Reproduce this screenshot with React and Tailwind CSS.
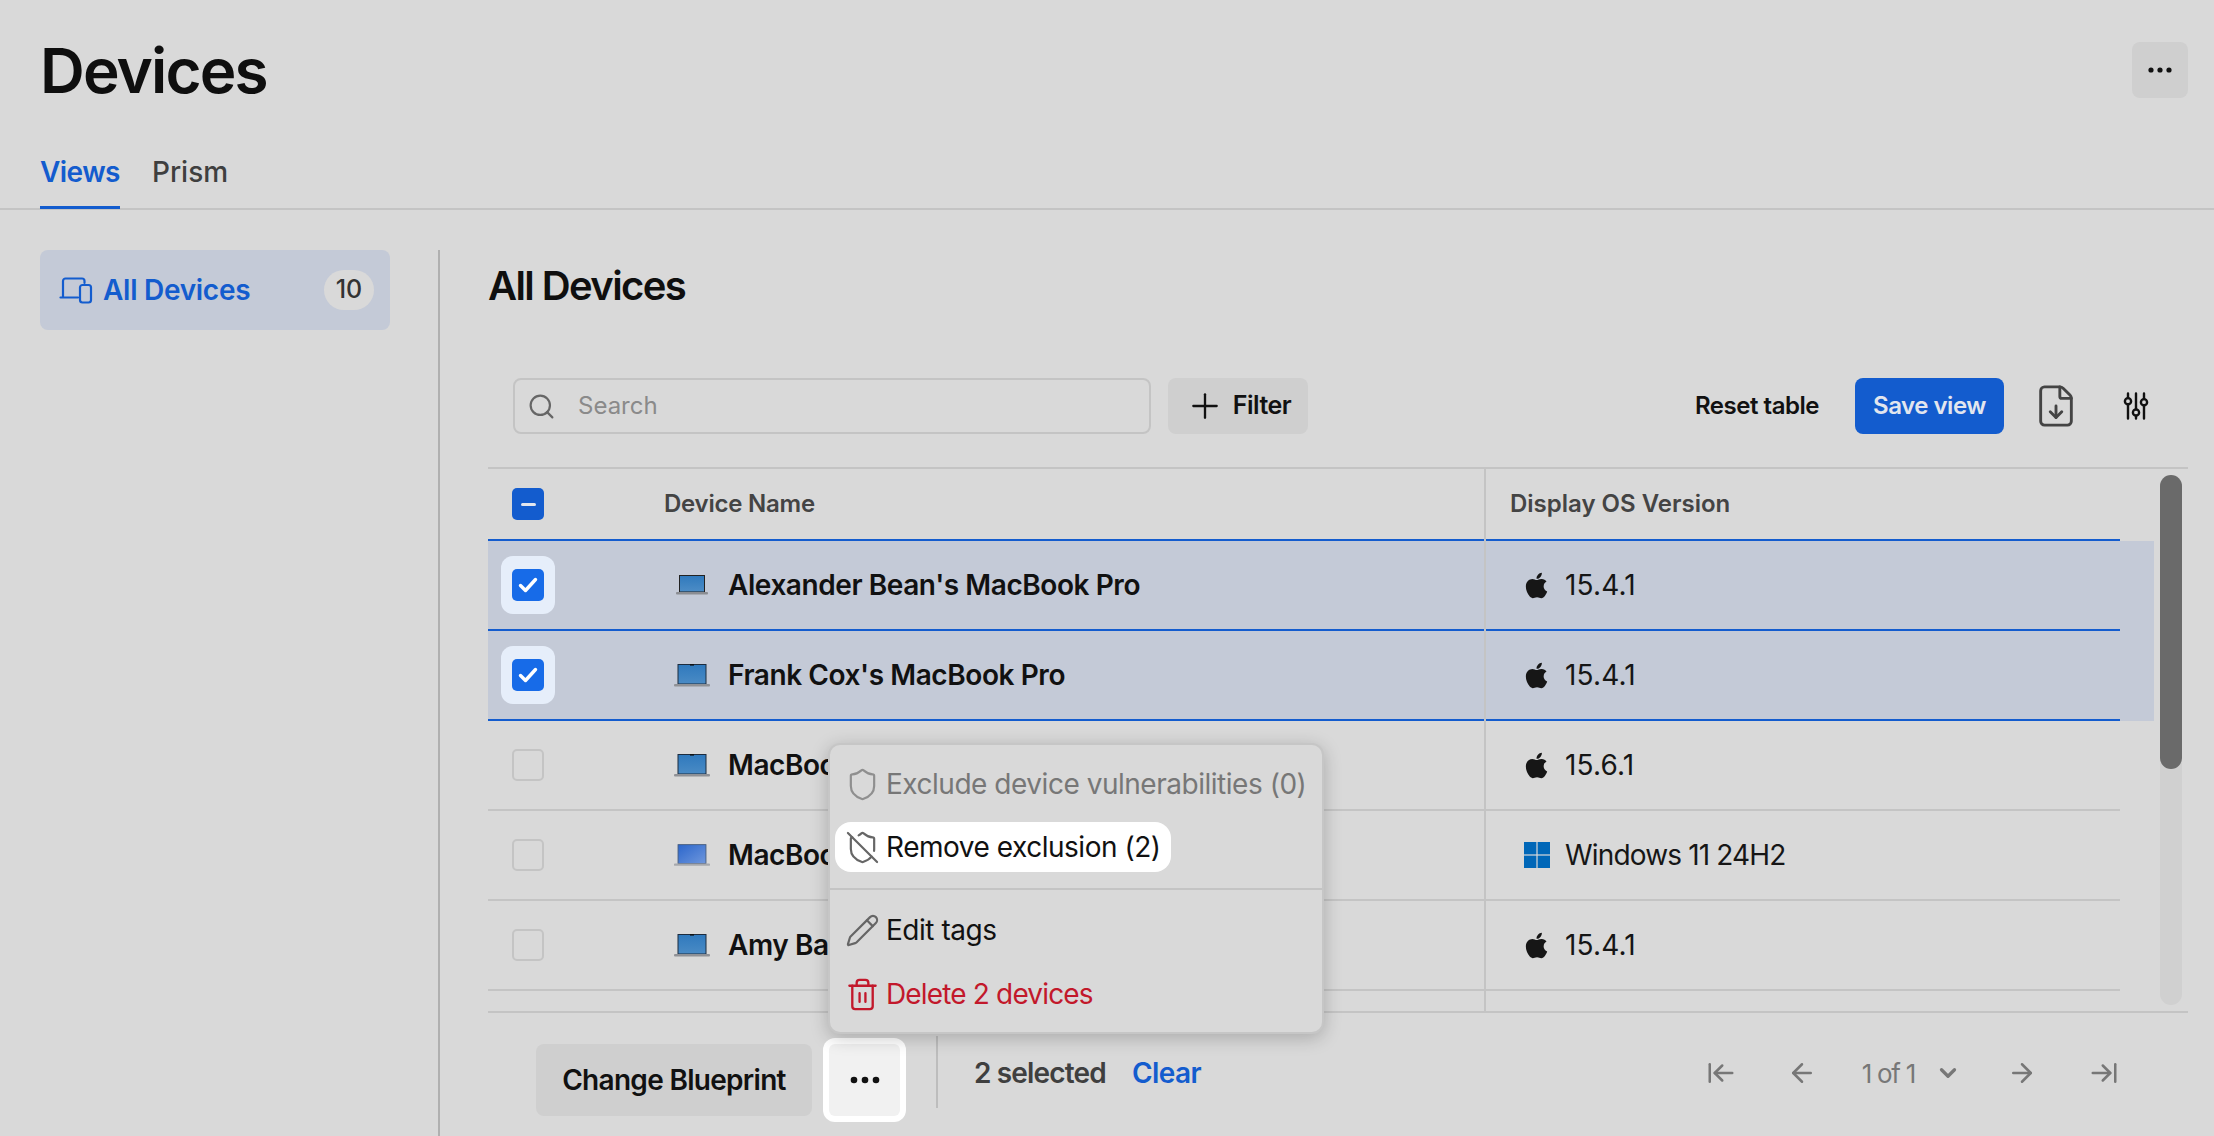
import React from "react";
import { Search, Plus, Shield, ShieldOff, Pencil, Trash2, ArrowLeft, ArrowRight, ArrowLeftToLine, ArrowRightToLine, ChevronDown, FileDown } from "lucide-react";
import { FaApple } from "react-icons/fa";

function Dots({ large }) {
  return large ? (
    <svg width="30" height="8" viewBox="0 0 30 8">
      <circle cx="4" cy="4" r="3.3" fill="#111" />
      <circle cx="15" cy="4" r="3.3" fill="#111" />
      <circle cx="26" cy="4" r="3.3" fill="#111" />
    </svg>
  ) : (
    <svg width="24" height="6" viewBox="0 0 24 6">
      <circle cx="3" cy="3" r="2.6" fill="#111" />
      <circle cx="12" cy="3" r="2.6" fill="#111" />
      <circle cx="21" cy="3" r="2.6" fill="#111" />
    </svg>
  );
}

function NavIcon() {
  return (
    <svg width="34" height="27" viewBox="0 0 34 27" fill="none" stroke="#135cce" strokeWidth="2.2" strokeLinecap="round" strokeLinejoin="round">
      <path d="M4 20V4a2.5 2.5 0 0 1 2.5-2.5H23a2.5 2.5 0 0 1 2.5 2.5v2" />
      <path d="M1.5 20.5H19" />
      <rect x="21" y="8" width="11" height="17.5" rx="2.5" />
    </svg>
  );
}

function SlidersIcon() {
  return (
    <svg width="26" height="28" viewBox="0 0 26 28" fill="none" stroke="#111" strokeWidth="2.4" strokeLinecap="round">
      <path d="M5 1.5v4.5M5 12.5v14M13 1.5v16M13 23.5v3M21 1.5v5.5M21 13.5v13" />
      <circle cx="5" cy="9.2" r="3.1" />
      <circle cx="13" cy="20.5" r="3.1" />
      <circle cx="21" cy="10.2" r="3.1" />
    </svg>
  );
}

function Laptop({ variant }) {
  if (variant === "small") {
    return (
      <svg width="32" height="20" viewBox="0 0 32 20">
        <defs>
          <linearGradient id="lapA" x1="0" y1="0" x2="0" y2="1">
            <stop offset="0" stopColor="#2f79bd" />
            <stop offset="1" stopColor="#4d8dc6" />
          </linearGradient>
        </defs>
        <rect x="3.5" y="0.5" width="25" height="16.5" fill="url(#lapA)" stroke="#222" strokeWidth="1" />
        <rect x="0" y="17" width="32" height="2.5" rx="1" fill="#8b8d92" />
      </svg>
    );
  }
  if (variant === "win") {
    return (
      <svg width="40" height="24" viewBox="0 0 40 24">
        <defs>
          <linearGradient id="lapW" x1="0" y1="0" x2="1" y2="1">
            <stop offset="0" stopColor="#2b66cc" />
            <stop offset="1" stopColor="#6f97dc" />
          </linearGradient>
        </defs>
        <rect x="4.5" y="0.5" width="31" height="21" fill="url(#lapW)" stroke="#445a7c" strokeWidth="1" />
        <rect x="0" y="21.5" width="40" height="2.5" rx="1" fill="#a6a8ad" />
      </svg>
    );
  }
  return (
    <svg width="36" height="23" viewBox="0 0 36 23">
      <defs>
        <linearGradient id="lapB" x1="0" y1="0" x2="0" y2="1">
          <stop offset="0" stopColor="#2f79bd" />
          <stop offset="1" stopColor="#4a8bc5" />
        </linearGradient>
      </defs>
      <rect x="4" y="0.5" width="28" height="19.5" fill="url(#lapB)" stroke="#1d2c3e" strokeWidth="1" />
      <rect x="16" y="0" width="4" height="1.6" fill="#111" />
      <rect x="0" y="20" width="36" height="2.5" rx="1" fill="#8f9196" />
    </svg>
  );
}

function WindowsIcon() {
  return (
    <svg width="26" height="26" viewBox="0 0 26 26">
      <rect x="0" y="0" width="12.4" height="12.4" fill="#0067b8" />
      <rect x="13.6" y="0" width="12.4" height="12.4" fill="#0067b8" />
      <rect x="0" y="13.6" width="12.4" height="12.4" fill="#0067b8" />
      <rect x="13.6" y="13.6" width="12.4" height="12.4" fill="#0067b8" />
    </svg>
  );
}

function CheckBox({ checked }) {
  if (checked) {
    return (
      <div className="relative flex h-8 w-8 items-center justify-center rounded-[5px] bg-[#176be8]">
        <div className="absolute -inset-x-[11px] -inset-y-[13px] -z-0 rounded-xl bg-[#e6eefa]" />
        <div className="relative flex h-8 w-8 items-center justify-center rounded-[5px] bg-[#176be8]">
          <svg width="20" height="16" viewBox="0 0 20 16" fill="none" stroke="#fff" strokeWidth="3.4" strokeLinecap="round" strokeLinejoin="round">
            <path d="M2.5 8.5l5 5L17.5 2.5" />
          </svg>
        </div>
      </div>
    );
  }
  return <div className="h-8 w-8 rounded-[5px] border-2 border-[#c4c4c4]" />;
}

const ROWS = [
  { name: "Alexander Bean's MacBook Pro", os: "15.4.1", icon: "small", selected: true, border: "border-[#135cce]" },
  { name: "Frank Cox's MacBook Pro", os: "15.4.1", icon: "big", selected: true, border: "border-[#135cce]" },
  { name: "MacBook Pro", os: "15.6.1", icon: "big", selected: false, border: "border-[#c4c4c4]" },
  { name: "MacBook Pro", os: "Windows 11 24H2", icon: "win", selected: false, border: "border-[#c4c4c4]" },
  { name: "Amy Bartlett's MacBook Pro", os: "15.4.1", icon: "big", selected: false, border: "border-[#c4c4c4]" },
];

function Row({ row }) {
  const windows = row.os.startsWith("Windows");
  return (
    <div className={`w-[1666px] ${row.selected ? "bg-[#c4cad7]" : ""}`}>
      <div className={`flex h-[90px] w-[1632px] items-center border-b-2 ${row.border}`}>
        <div className="flex w-[177px] shrink-0 items-center pl-6">
          <CheckBox checked={row.selected} />
        </div>
        <div className="flex w-[819px] shrink-0 items-center pl-[9px]">
          <div className="mr-[18px] flex w-[36px] shrink-0 justify-center">
            <Laptop variant={row.icon} />
          </div>
          <span className="text-[28px] font-semibold tracking-[-0.015em] whitespace-nowrap text-[#111]">{row.name}</span>
        </div>
        <div className="flex items-center pl-[40px]">
          <div className="flex w-[41px] shrink-0 items-center">
            {windows ? <WindowsIcon /> : <FaApple size={29} color="#161616" className="-ml-[2px]" />}
          </div>
          <span className={`text-[28px] whitespace-nowrap text-[#161616] ${windows ? "tracking-[-0.03em]" : "tracking-[0.005em]"}`}>{row.os}</span>
        </div>
      </div>
    </div>
  );
}

function MenuItem({ icon, children, className = "", text = "text-[#111]", tracking = "tracking-[-0.017em]" }) {
  return (
    <div className={`flex h-[50px] items-center rounded-2xl pl-3 pr-[10px] ${className}`}>
      <span className="flex w-[39px] shrink-0 items-center">{icon}</span>
      <span className={`text-[28px] whitespace-nowrap ${tracking} ${text}`}>{children}</span>
    </div>
  );
}

export default function App() {
  return (
    <div className="relative h-[1136px] w-[2214px] overflow-hidden bg-[#d9d9d9] font-['Inter',sans-serif]">
      {/* Header */}
      <div className="flex h-[146px] items-start justify-between pl-10 pr-[26px] pt-[42px]">
        <h1 className="text-[62px] leading-[58px] font-semibold tracking-[-0.03em] text-[#0f0f0f]">Devices</h1>
        <button className="flex h-14 w-14 items-center justify-center rounded-lg bg-[#cfcfcf]">
          <Dots />
        </button>
      </div>

      {/* Tabs */}
      <div className="flex h-[64px] items-start gap-8 border-b-2 border-[#c4c4c4] pl-10">
        <div className="h-[63px] border-b-[3px] border-[#135cce] pt-[8px] text-[28px] leading-9 font-semibold tracking-[-0.02em] text-[#135cce]">Views</div>
        <div className="pt-[8px] text-[28px] leading-9 font-medium tracking-normal text-[#3f3f3f]">Prism</div>
      </div>

      {/* Body */}
      <div className="flex h-[926px] pt-10">
        <aside className="h-full w-[440px] shrink-0 border-r-2 border-[#b0b0b0] pl-10">
          <div className="flex h-20 w-[350px] items-center rounded-lg bg-[#c4cad7] pl-[19px] pr-4">
            <NavIcon />
            <span className="ml-[10px] text-[28px] font-semibold tracking-[-0.01em] whitespace-nowrap text-[#135cce]">All Devices</span>
            <span className="ml-auto flex h-10 w-[50px] items-center justify-center rounded-full bg-[#d9d9d9] text-[25px] font-medium text-[#333]">10</span>
          </div>
        </aside>

        <main className="w-[1748px] shrink-0 pl-[48px]">
          <h2 className="pt-[16px] text-[40px] leading-[40px] font-semibold tracking-[-0.04em] text-[#0f0f0f]">All Devices</h2>

          {/* Toolbar */}
          <div className="mt-[72px] flex h-14 items-center pl-[25px]">
            <div className="flex h-14 w-[638px] shrink-0 items-center rounded-lg border-2 border-[#c4c4c4] pl-[12px]">
              <Search size={29} strokeWidth={1.8} color="#666" />
              <span className="ml-[22px] text-[24px] text-[#8a8a8a]">Search</span>
            </div>
            <button className="ml-[17px] flex h-14 w-[140px] shrink-0 items-center justify-center gap-[8px] rounded-lg bg-[#cfcfcf]">
              <Plus size={40} strokeWidth={1.4} color="#111" />
              <span className="text-[25px] font-semibold tracking-[-0.02em] text-[#111]">Filter</span>
            </button>
            <span className="ml-[387px] w-[126px] shrink-0 text-[24px] font-semibold tracking-[-0.02em] whitespace-nowrap text-[#111]">Reset table</span>
            <button className="ml-[34px] flex h-14 w-[149px] shrink-0 items-center justify-center rounded-lg bg-[#135cce] text-[24px] font-semibold tracking-[-0.02em] whitespace-nowrap text-[#e2e6ee]">Save view</button>
            <FileDown size={46} strokeWidth={1.5} color="#444" className="ml-[29px] shrink-0" />
            <span className="ml-[44px] shrink-0">
              <SlidersIcon />
            </span>
          </div>

          {/* Table */}
          <div className="relative mt-[33px] h-[544px] overflow-hidden border-t-2 border-[#c4c4c4]">
            <div className="flex h-[72px] w-[1632px] items-center border-b-2 border-[#135cce]">
              <div className="flex w-[176px] shrink-0 pl-6">
                <div className="flex h-8 w-8 items-center justify-center rounded-[5px] bg-[#135cce]">
                  <div className="h-[3px] w-[15px] rounded-full bg-[#e2e6ee]" />
                </div>
              </div>
              <div className="w-[846px] shrink-0 text-[24px] font-semibold tracking-[-0.01em] text-[#444]">Device Name</div>
              <div className="text-[24px] font-semibold tracking-normal whitespace-nowrap text-[#444]">Display OS Version</div>
            </div>
            {ROWS.map((row, i) => (
              <Row key={i} row={row} />
            ))}
            {/* column rule, scrollbar */}
            <div className="absolute top-0 bottom-0 left-[996px] w-[2px] bg-[#c4c4c4]" />
            <div className="absolute top-[6px] left-[1672px] h-[530px] w-[22px] rounded-full bg-[#d0d0d0]">
              <div className="h-[294px] w-[22px] rounded-full bg-[#6a6a6a]" />
            </div>
          </div>

          {/* Footer */}
          <div className="flex h-[125px] items-start border-t-2 border-[#c4c4c4] pl-[48px] pt-[31px]">
            <button className="flex h-[72px] w-[276px] shrink-0 items-center justify-center rounded-lg bg-[#cfcfcf] text-[28px] font-semibold tracking-[-0.025em] whitespace-nowrap text-[#111]">Change Blueprint</button>
            <button className="ml-[17px] flex h-[72px] w-[71px] shrink-0 items-center justify-center rounded-md bg-[#f1f1f1] ring-[6px] ring-white">
              <Dots large />
            </button>
            <div className="-mt-2 ml-[36px] h-[72px] w-[2px] shrink-0 bg-[#bdbdbd]" />
            <span className="ml-[36px] mt-[8px] text-[28px] font-semibold tracking-[-0.03em] whitespace-nowrap text-[#3f3f3f]">2 selected</span>
            <span className="ml-[26px] mt-[8px] text-[28px] font-semibold tracking-[-0.02em] text-[#135cce]">Clear</span>
            <div className="ml-auto mr-[69px] mt-[3px] flex h-[52px] items-center text-[#777]">
              <ArrowLeftToLine size={30} strokeWidth={2} />
              <ArrowLeft size={30} strokeWidth={2} className="ml-[51px]" />
              <span className="ml-[45px] text-[26px] tracking-[-0.05em] whitespace-nowrap">1 of 1</span>
              <ChevronDown size={26} strokeWidth={3} className="ml-[20px]" />
              <ArrowRight size={30} strokeWidth={2} className="ml-[46px]" />
              <ArrowRightToLine size={30} strokeWidth={2} className="ml-[52px]" />
            </div>
          </div>
        </main>
      </div>

      {/* Action menu */}
      <div className="absolute top-[743px] left-[828px] flex h-[291px] w-[496px] flex-col rounded-xl border-2 border-[#c6c6c6] bg-[#d9d9d9] pt-[14px] shadow-[0_4px_18px_rgba(0,0,0,0.22)]">
        <div className="flex flex-col items-start gap-[13px] px-[5px]">
          <MenuItem icon={<Shield size={35} strokeWidth={1.5} color="#8f8f8f" className="-ml-[2px] shrink-0" />} text="text-[#777]">Exclude device vulnerabilities (0)</MenuItem>
          <MenuItem icon={<ShieldOff size={35} strokeWidth={1.5} color="#666" className="-ml-[2px] shrink-0" />} className="bg-white">Remove exclusion (2)</MenuItem>
        </div>
        <div className="mt-[16px] h-[2px] w-full bg-[#c4c4c4]" />
        <div className="mt-[15px] flex flex-col items-start gap-[14px] px-[5px]">
          <MenuItem icon={<Pencil size={35} strokeWidth={1.5} color="#666" className="-ml-[2px] shrink-0" />}>Edit tags</MenuItem>
          <MenuItem icon={<Trash2 size={35} strokeWidth={1.6} color="#c2182b" className="-ml-[2px] shrink-0" />} text="text-[#c2182b]" tracking="tracking-[-0.03em]">Delete 2 devices</MenuItem>
        </div>
      </div>
    </div>
  );
}
